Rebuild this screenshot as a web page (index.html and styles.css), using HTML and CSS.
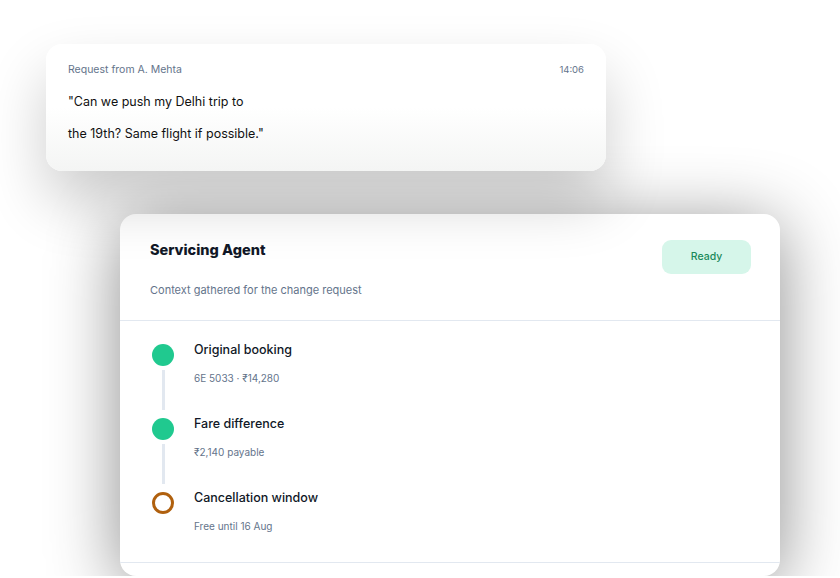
FILE: index.html
```html
<!DOCTYPE html>
<html lang="en">
<head>
    <meta charset="UTF-8">
    <meta name="viewport" content="width=device-width, initial-scale=1.0">
    <title>Servicing Agent</title>
    <link rel="stylesheet" href="styles.css">
</head>
<body>
    <div class="request">
        <div class="request-head">
            <span>Request from A. Mehta</span>
            <span class="time">14:06</span>
        </div>
        <p class="quote">"Can we push my Delhi trip to<br>the 19th? Same flight if possible."</p>
    </div>

    <div class="agent">
        <div class="agent-head">
            <div>
                <h2>Servicing Agent</h2>
                <p class="sub">Context gathered for the change request</p>
            </div>
            <span class="badge">Ready</span>
        </div>
        <ul class="steps">
            <li class="step">
                <div class="rail"><span class="dot done"></span><span class="line"></span></div>
                <div class="info">
                    <div class="title">Original booking</div>
                    <div class="meta">6E 5033 · ₹14,280</div>
                </div>
            </li>
            <li class="step">
                <div class="rail"><span class="dot done"></span><span class="line"></span></div>
                <div class="info">
                    <div class="title">Fare difference</div>
                    <div class="meta">₹2,140 payable</div>
                </div>
            </li>
            <li class="step">
                <div class="rail"><span class="dot pending"></span></div>
                <div class="info">
                    <div class="title">Cancellation window</div>
                    <div class="meta">Free until 16 Aug</div>
                </div>
            </li>
        </ul>
        <div class="agent-foot"></div>
    </div>
</body>
</html>
```

FILE: styles.css
```css
body {
    margin: 0;
    padding: 44px 0 0;
    background: #fff;
    font-family: Inter, 'Noto Sans', sans-serif;
    color: #111827;
    overflow: hidden;
}
.request {
    position: relative;
    z-index: 1;
    width: 560px;
    height: 127px;
    box-sizing: border-box;
    margin-left: 46px;
    padding: 18px 22px 0;
    border-radius: 16px;
    background: linear-gradient(#fff 50%, #f4f5f4);
    box-shadow: 0 30px 60px rgba(0, 0, 0, 0.2);
}
.request-head {
    display: flex;
    justify-content: space-between;
    font-size: 10.5px;
    line-height: 16px;
    color: #64748b;
}
.request-head .time {
    font-size: 9.5px;
}
.quote {
    margin: 8px 0 0;
    font-size: 12.5px;
    line-height: 32px;
    color: #111;
}
.agent {
    width: 660px;
    height: 362px;
    margin: 43px 0 0 120px;
    border-radius: 16px;
    background: #fff;
    overflow: hidden;
    box-shadow: 0 10px 70px rgba(0, 0, 0, 0.45);
}
.agent-head {
    display: flex;
    justify-content: space-between;
    align-items: flex-start;
    padding: 26px 29px 22px 30px;
    border-bottom: 1px solid #e2e8f0;
}
.agent-head h2 {
    margin: 0;
    font-size: 14.5px;
    line-height: 20px;
    font-weight: 800;
}
.sub {
    margin: 22px 0 0;
    font-size: 11px;
    line-height: 16px;
    color: #64748b;
}
.badge {
    width: 89px;
    height: 34px;
    line-height: 34px;
    text-align: center;
    border-radius: 9px;
    background: #d6f6ea;
    color: #1b8a5a;
    font-size: 10.5px;
    font-weight: 500;
}
.steps {
    list-style: none;
    margin: 0;
    padding: 20px 32px 28px;
}
.step {
    display: flex;
    gap: 20px;
    height: 74px;
}
.step:last-child {
    height: 45px;
}
.rail {
    display: flex;
    flex-direction: column;
    align-items: center;
    padding-top: 3px;
}
.dot {
    width: 22px;
    height: 22px;
    border-radius: 50%;
    box-sizing: border-box;
}
.dot.done {
    background: #20c98f;
}
.dot.pending {
    border: 3px solid #b0600e;
}
.line {
    width: 3px;
    height: 40px;
    margin-top: 4px;
    background: #e2e8f0;
}
.title {
    font-size: 12.5px;
    line-height: 18px;
    font-weight: 500;
}
.meta {
    margin-top: 11px;
    font-size: 10px;
    line-height: 16px;
    color: #64748b;
}
.agent-foot {
    height: 13px;
    border-top: 1px solid #e2e8f0;
}
```
